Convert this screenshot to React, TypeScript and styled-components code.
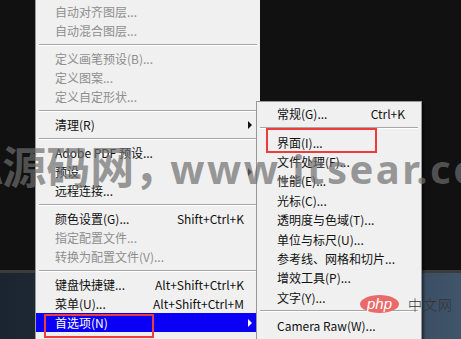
import React from "react";
import styled, { createGlobalStyle } from "styled-components";

const GlobalStyle = createGlobalStyle`
  html, body {
    margin: 0;
    padding: 0;
    background: #111111;
    overflow: hidden;
  }
  body {
    font-family: "Noto Sans CJK SC", "Noto Sans", sans-serif;
  }
`;

const Stage = styled.div`
  position: relative;
  width: 461px;
  height: 339px;
  overflow: hidden;
  display: flex;
  align-items: flex-start;
  background: #111111;
`;

// the lower panel behind the menus (bottom strip of the window)
const Backdrop = styled.div`
  position: absolute;
  left: 0;
  right: 0;
  top: 270px;
  bottom: 0;
  border-top: 3px solid #3b3b3b;
  background: linear-gradient(to right, #1b2531 0%, #2f4052 70%, #40546a 100%);
`;

const MainMenu = styled.div`
  position: relative;
  margin-left: 35px;
  width: 225px;
  height: 339px;
  padding-top: 2px;
  box-sizing: border-box;
  background: #f0f0f0;
  border-left: 1px solid #9a9a9a;
  display: flex;
  flex-direction: column;
`;

const SubMenu = styled.div`
  position: absolute;
  left: 256px;
  top: 101px;
  width: 166px;
  height: 250px;
  padding-top: 2px;
  box-sizing: border-box;
  background: #f0f0f0;
  border: 1px solid #979797;
  box-shadow: 2px 2px 2px rgba(0, 0, 0, 0.45);
  display: flex;
  flex-direction: column;
`;

const Row = styled.div<{ $active?: boolean; $disabled?: boolean; $indent: number; $h: number }>`
  position: relative;
  display: flex;
  align-items: center;
  height: ${(p) => p.$h}px;
  flex-shrink: 0;
  padding: 0 8px 0 ${(p) => p.$indent}px;
  font-size: 12px;
  color: ${(p) => (p.$active ? "#ffffff" : p.$disabled ? "#8e8e8e" : "#111111")};
  background: ${(p) => (p.$active ? "#0a00f5" : "transparent")};
  white-space: nowrap;
`;

const Label = styled.span`
  flex: 1;
`;

const Shortcut = styled.span`
  padding-right: 8px;
`;

const Arrow = styled.span<{ $light?: boolean }>`
  width: 0;
  height: 0;
  border-top: 4px solid transparent;
  border-bottom: 4px solid transparent;
  border-left: 4px solid ${(p) => (p.$light ? "#ffffff" : "#111111")};
`;

const Separator = styled.div<{ $h: number }>`
  height: ${(p) => p.$h}px;
  flex-shrink: 0;
  display: flex;
  align-items: center;
  padding: 0 3px;
  &::after {
    content: "";
    flex: 1;
    height: 1px;
    background: #a6a6a6;
    border-bottom: 1px solid #ffffff;
  }
`;

const Mark = styled.span<{ $left: number; $top: number; $w: number; $h: number }>`
  position: absolute;
  left: ${(p) => p.$left}px;
  top: ${(p) => p.$top}px;
  width: ${(p) => p.$w}px;
  height: ${(p) => p.$h}px;
  box-sizing: border-box;
  border: 2px solid #ee3b3b;
  pointer-events: none;
`;

const Watermark = styled.div`
  position: absolute;
  left: -26px;
  top: 143px;
  display: flex;
  align-items: baseline;
  font-family: "Noto Sans CJK SC", "Noto Sans", sans-serif;
  font-weight: 700;
  font-size: 44px;
  line-height: 1;
  color: rgba(110, 110, 110, 0.7);
  white-space: nowrap;
  pointer-events: none;
`;

const WmComma = styled.span`
  margin-right: -8px;
`;

const WmLatin = styled.span`
  font-family: "Noto Sans", sans-serif;
  font-size: 40px;
  letter-spacing: 2.5px;
`;

const PhpLogo = styled.div`
  position: absolute;
  left: 360px;
  top: 294px;
  display: flex;
  align-items: center;
  gap: 9px;
  pointer-events: none;
`;

const PhpPill = styled.span`
  width: 39px;
  height: 18px;
  border-radius: 50%;
  background: #ea6a6a;
  color: #ffffff;
  font-family: "Liberation Sans", Arial, sans-serif;
  font-style: italic;
  font-size: 15px;
  line-height: 17px;
  text-align: center;
`;

const PhpText = styled.span`
  font-family: "Noto Sans CJK SC", sans-serif;
  font-size: 14px;
  font-weight: 300;
  color: #333333;
  letter-spacing: 1px;
`;

type Item =
  | { sep: true }
  | {
      sep?: false;
      label: string;
      shortcut?: string;
      arrow?: boolean;
      disabled?: boolean;
      active?: boolean;
      mark?: { left: number; top: number; w: number; h: number };
    };

const mainItems: Item[] = [
  { label: "自动对齐图层...", disabled: true },
  { label: "自动混合图层...", disabled: true },
  { sep: true },
  { label: "定义画笔预设(B)...", disabled: true },
  { label: "定义图案...", disabled: true },
  { label: "定义自定形状...", disabled: true },
  { sep: true },
  { label: "清理(R)", arrow: true },
  { sep: true },
  { label: "Adobe PDF 预设..." },
  { label: "预设", arrow: true },
  { label: "远程连接..." },
  { sep: true },
  { label: "颜色设置(G)...", shortcut: "Shift+Ctrl+K" },
  { label: "指定配置文件...", disabled: true },
  { label: "转换为配置文件(V)...", disabled: true },
  { sep: true },
  { label: "键盘快捷键...", shortcut: "Alt+Shift+Ctrl+K" },
  { label: "菜单(U)...", shortcut: "Alt+Shift+Ctrl+M" },
  { label: "首选项(N)", arrow: true, active: true, mark: { left: 8, top: 1, w: 110, h: 24 } },
];

const subItems: Item[] = [
  { label: "常规(G)...", shortcut: "Ctrl+K" },
  { sep: true },
  { label: "界面(I)...", mark: { left: 9, top: -4, w: 111, h: 25 } },
  { label: "文件处理(F)..." },
  { label: "性能(E)..." },
  { label: "光标(C)..." },
  { label: "透明度与色域(T)..." },
  { label: "单位与标尺(U)..." },
  { label: "参考线、网格和切片..." },
  { label: "增效工具(P)..." },
  { label: "文字(Y)..." },
  { sep: true },
  { label: "Camera Raw(W)..." },
];

function Menu({ items, indent, rowH }: { items: Item[]; indent: number; rowH: number }) {
  return (
    <>
      {items.map((it, i) =>
        it.sep ? (
          <Separator key={i} $h={9} />
        ) : (
          <Row key={i} $h={rowH} $indent={indent} $active={it.active} $disabled={it.disabled}>
            <Label>{it.label}</Label>
            {it.shortcut && <Shortcut>{it.shortcut}</Shortcut>}
            {it.arrow && <Arrow $light={it.active} />}
            {it.mark && <Mark $left={it.mark.left} $top={it.mark.top} $w={it.mark.w} $h={it.mark.h} />}
          </Row>
        )
      )}
    </>
  );
}

export default function App() {
  return (
    <>
      <GlobalStyle />
      <Stage>
        <Backdrop />
        <MainMenu>
          <Menu items={mainItems} indent={19} rowH={19} />
        </MainMenu>
        <SubMenu>
          <Menu items={subItems} indent={20} rowH={19.4} />
        </SubMenu>
        <Watermark>
          <span>A源码网</span>
          <WmComma>，</WmComma>
          <WmLatin>www.itsear.com</WmLatin>
        </Watermark>
        <PhpLogo>
          <PhpPill>php</PhpPill>
          <PhpText>中文网</PhpText>
        </PhpLogo>
      </Stage>
    </>
  );
}
